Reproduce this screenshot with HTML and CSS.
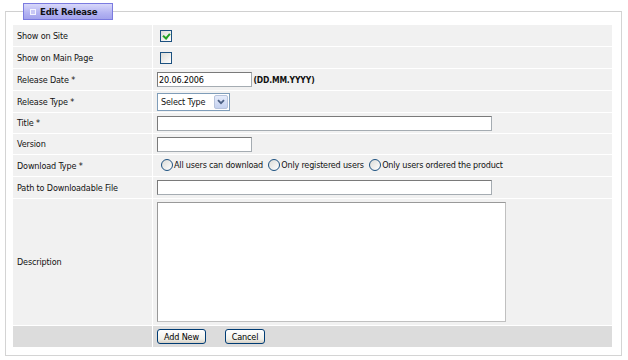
FILE: index.html
```html
<!DOCTYPE html>
<html>
<head>
<meta charset="utf-8">
<link rel="stylesheet" href="styles.css">
</head>
<body>
<fieldset class="box">
  <legend class="legend"><span class="legend-icon"></span>Edit Release</legend>
  <table class="form">
    <tr class="row r21">
      <td class="label">Show on Site</td>
      <td class="value"><input type="checkbox" class="chk" checked></td>
    </tr>
    <tr class="row r21">
      <td class="label">Show on Main Page</td>
      <td class="value"><input type="checkbox" class="chk"></td>
    </tr>
    <tr class="row r21">
      <td class="label">Release Date *</td>
      <td class="value"><input type="text" class="txt short" value="20.06.2006"> <b class="hint">(DD.MM.YYYY)</b></td>
    </tr>
    <tr class="row r21">
      <td class="label">Release Type *</td>
      <td class="value"><span class="sel-wrap"><select class="sel"><option>Select Type</option></select><span class="sel-btn"><svg width="8" height="6" viewBox="0 0 8 6"><path d="M1 1.2 L4 4.2 L7 1.2" fill="none" stroke="#4d6185" stroke-width="1.8"/></svg></span></span></td>
    </tr>
    <tr class="row r20">
      <td class="label">Title *</td>
      <td class="value"><input type="text" class="txt long"></td>
    </tr>
    <tr class="row r20">
      <td class="label">Version</td>
      <td class="value"><input type="text" class="txt short"></td>
    </tr>
    <tr class="row r21">
      <td class="label">Download Type *</td>
      <td class="value radios">
        <label class="opt"><input type="radio" name="dl" class="rad">All users can download</label>
        <label class="opt"><input type="radio" name="dl" class="rad">Only registered users</label>
        <label class="opt"><input type="radio" name="dl" class="rad">Only users ordered the product</label>
      </td>
    </tr>
    <tr class="row r21">
      <td class="label">Path to Downloadable File</td>
      <td class="value"><input type="text" class="txt long"></td>
    </tr>
    <tr class="row desc">
      <td class="label">Description</td>
      <td class="value"><textarea class="area"></textarea></td>
    </tr>
    <tr class="row actions">
      <td class="label"></td>
      <td class="value"><button class="btn add">Add New</button><button class="btn cancel">Cancel</button></td>
    </tr>
  </table>
</fieldset>
</body>
</html>
```

FILE: styles.css
```css
html, body {
  margin: 0;
  padding: 0;
  background: #ffffff;
}
body {
  font-family: "DejaVu Sans Condensed", "Liberation Sans", Arial, sans-serif;
  font-size: 9px;
  letter-spacing: -0.15px;
  color: #111;
}
.box {
  margin: 3px 6px 0 5px;
  padding: 4px 7px 7px 7px;
  border: 1px solid #d4d4d4;
  border-top-color: #d0d0d0;
  min-width: 0;
}
.legend {
  margin-left: 10px;
  padding: 0 4px 0 6px;
  height: 17px;
  width: 90px;
  box-sizing: border-box;
  border: 1px solid #7b7be0;
  background: linear-gradient(#d8d8fa, #b3b3f2 60%, #a3a3ec);
  font-weight: bold;
  font-size: 9.5px;
  letter-spacing: -0.2px;
  display: flex;
  align-items: center;
  white-space: nowrap;
}
.legend-icon {
  display: inline-block;
  width: 4px;
  height: 4px;
  border: 1px solid #f4f4ff;
  background: #c8c8f6;
  margin-right: 4px;
}
.form {
  width: 100%;
  border-collapse: separate;
  border-spacing: 1px;
  margin-left: -1px;
}
.row td {
  background: #f1f1f1;
  padding: 0 4px;
  vertical-align: middle;
}
.row.r21 td { height: 21px; }
.row.r20 td { height: 20px; }
.row.desc td { height: 126px; }
.row.actions td {
  background: #dcdcdc;
  height: 21px;
}
.label {
  width: 131px;
}
.value {
  white-space: nowrap;
}
.chk {
  appearance: none;
  -webkit-appearance: none;
  width: 12px;
  height: 12px;
  margin: 0 0 0 3px;
  border: 1px solid #1c5180;
  background: linear-gradient(135deg, #dcdcd7, #ffffff);
  position: relative;
  vertical-align: middle;
  display: block;
  box-sizing: border-box;
}
.chk:checked::after {
  content: "";
  position: absolute;
  left: 3px;
  top: 1px;
  width: 3px;
  height: 5px;
  border-right: 2px solid #21a121;
  border-bottom: 2px solid #21a121;
  transform: rotate(40deg);
}
.txt {
  box-sizing: border-box;
  height: 15px;
  border: 1px solid #a5acb2;
  border-top-color: #7a7a7a;
  border-left-color: #7a7a7a;
  background: #fff;
  font-family: "DejaVu Sans Condensed", "Liberation Sans", Arial, sans-serif;
  font-size: 9px;
  letter-spacing: -0.15px;
  padding: 0 1px;
  margin: 0;
  vertical-align: middle;
}
.txt.short { width: 95px; }
.txt.long { width: 335px; }
.hint {
  font-size: 8.5px;
  vertical-align: middle;
  margin-left: -1px;
}
.sel-wrap {
  position: relative;
  display: inline-block;
  vertical-align: middle;
}
.sel {
  appearance: none;
  -webkit-appearance: none;
  box-sizing: border-box;
  width: 73px;
  height: 18px;
  border: 1px solid #7f9db9;
  background: #fff;
  font-family: "DejaVu Sans Condensed", "Liberation Sans", Arial, sans-serif;
  font-size: 9px;
  letter-spacing: -0.15px;
  color: #111;
  padding: 0 0 0 3px;
  margin: 0;
  display: block;
}
.sel-btn {
  position: absolute;
  right: 1px;
  top: 1px;
  width: 14px;
  height: 14px;
  box-sizing: border-box;
  border: 1px solid #b7c3dc;
  border-radius: 2px;
  background: linear-gradient(#e6ecfb, #c4d1ef);
  display: flex;
  align-items: center;
  justify-content: center;
  margin: 1px 1px 0 0;
}
.radios {
  padding-left: 4px;
  letter-spacing: -0.2px;
}
.opt {
  display: inline-flex;
  align-items: center;
  margin-right: 0;
}
.opt + .opt .rad {
  margin-left: 3px;
}
.rad {
  appearance: none;
  -webkit-appearance: none;
  width: 12px;
  height: 12px;
  margin: 0 1px 0 4px;
  border: 1px solid #1c5180;
  border-radius: 50%;
  background: linear-gradient(135deg, #dcdcd7, #ffffff);
  box-sizing: border-box;
}
.area {
  box-sizing: border-box;
  width: 349px;
  height: 120px;
  border: 1px solid #c0c0c0;
  border-top-color: #999;
  border-left-color: #999;
  background: #fff;
  resize: none;
  margin: 2px 0 3px 0;
  display: block;
}
.btn {
  box-sizing: border-box;
  height: 15px;
  padding: 0;
  border: 1px solid #003c74;
  border-radius: 3px;
  background: linear-gradient(#ffffff, #f0f0ea 70%, #d6d0c5);
  font-family: "DejaVu Sans Condensed", "Liberation Sans", Arial, sans-serif;
  font-size: 9px;
  letter-spacing: -0.15px;
  color: #000;
  vertical-align: middle;
  line-height: 12px;
}
.btn.add { width: 49px; margin-right: 19px; }
.btn.cancel { width: 40px; }
```
